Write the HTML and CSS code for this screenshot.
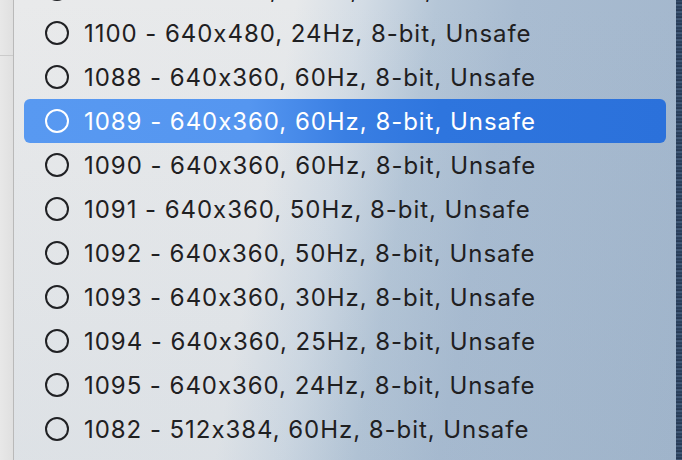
FILE: index.html
```html
<!DOCTYPE html>
<html>
<head>
<meta charset="utf-8">
<link rel="stylesheet" href="styles.css">
</head>
<body>
<div class="screen">
  <div class="side"><div class="side-top"></div></div>
  <div class="menu">
    <ul class="items">
      <li class="item"><span class="radio"></span><span class="label">1101 - 640x480, 30Hz, 8-bit, Unsafe</span></li>
      <li class="item"><span class="radio"></span><span class="label">1100 - 640x480, 24Hz, 8-bit, Unsafe</span></li>
      <li class="item"><span class="radio"></span><span class="label">1088 - 640x360, 60Hz, 8-bit, Unsafe</span></li>
      <li class="item active"><span class="radio"></span><span class="label">1089 - 640x360, 60Hz, 8-bit, Unsafe</span></li>
      <li class="item"><span class="radio"></span><span class="label">1090 - 640x360, 60Hz, 8-bit, Unsafe</span></li>
      <li class="item"><span class="radio"></span><span class="label">1091 - 640x360, 50Hz, 8-bit, Unsafe</span></li>
      <li class="item"><span class="radio"></span><span class="label">1092 - 640x360, 50Hz, 8-bit, Unsafe</span></li>
      <li class="item"><span class="radio"></span><span class="label">1093 - 640x360, 30Hz, 8-bit, Unsafe</span></li>
      <li class="item"><span class="radio"></span><span class="label">1094 - 640x360, 25Hz, 8-bit, Unsafe</span></li>
      <li class="item"><span class="radio"></span><span class="label">1095 - 640x360, 24Hz, 8-bit, Unsafe</span></li>
      <li class="item"><span class="radio"></span><span class="label">1082 - 512x384, 60Hz, 8-bit, Unsafe</span></li>
    </ul>
  </div>
  <div class="edge"></div>
</div>
</body>
</html>
```
FILE: styles.css
```css
* { box-sizing: border-box; }
html, body { margin: 0; padding: 0; }
body {
  width: 682px;
  height: 460px;
  overflow: hidden;
  font-family: Inter, "Noto Sans", sans-serif;
}
.screen {
  display: flex;
  width: 682px;
  height: 460px;
}
.side {
  width: 14px;
  flex: none;
  background: linear-gradient(90deg, #e8e8e8, #e0e0e0);
  border-right: 1px solid #b9b9b9;
  padding-top: 55px;
}
.side-top {
  height: 1px;
  background: #cbcbcb;
}
.menu {
  flex: 1;
  overflow: hidden;
  background: linear-gradient(100deg, #e9eaeb 0%, #e7e9eb 38%, #d3dce5 47%, #b5c6d7 57%, #a9bcd1 68%, #a2b6cc 100%);
  position: relative;
}
.menu::after {
  content: "";
  position: absolute;
  inset: 0;
  background: linear-gradient(180deg, rgba(160,180,200,0) 0%, rgba(140,165,190,0.12) 100%);
  pointer-events: none;
}
.items {
  list-style: none;
  margin: -33px 0 0 0;
  padding: 0 10px;
}
.item {
  height: 44px;
  display: flex;
  align-items: center;
  padding-left: 21px;
  border-radius: 6px;
  color: #1f2022;
  font-size: 24px;
  letter-spacing: 0.95px;
  font-feature-settings: "calt" 0;
  position: relative;
  z-index: 1;
}
.radio {
  width: 24px;
  height: 24px;
  border: 2px solid #202124;
  border-radius: 50%;
  flex: none;
  margin-right: 15px;
}
.label {
  white-space: nowrap;
}
.active {
  background: linear-gradient(90deg, #5899f1 0%, #5596f0 35%, #3a7fe3 50%, #2e75de 65%, #2b71db 100%);
  color: #fff;
}
.active .radio {
  border-color: #fff;
}
.edge {
  width: 6px;
  flex: none;
  background: repeating-linear-gradient(180deg, #243a55 0px, #3c5474 2px, #1a2c44 3px, #4b6585 5px, #21364f 7px);
}
```
